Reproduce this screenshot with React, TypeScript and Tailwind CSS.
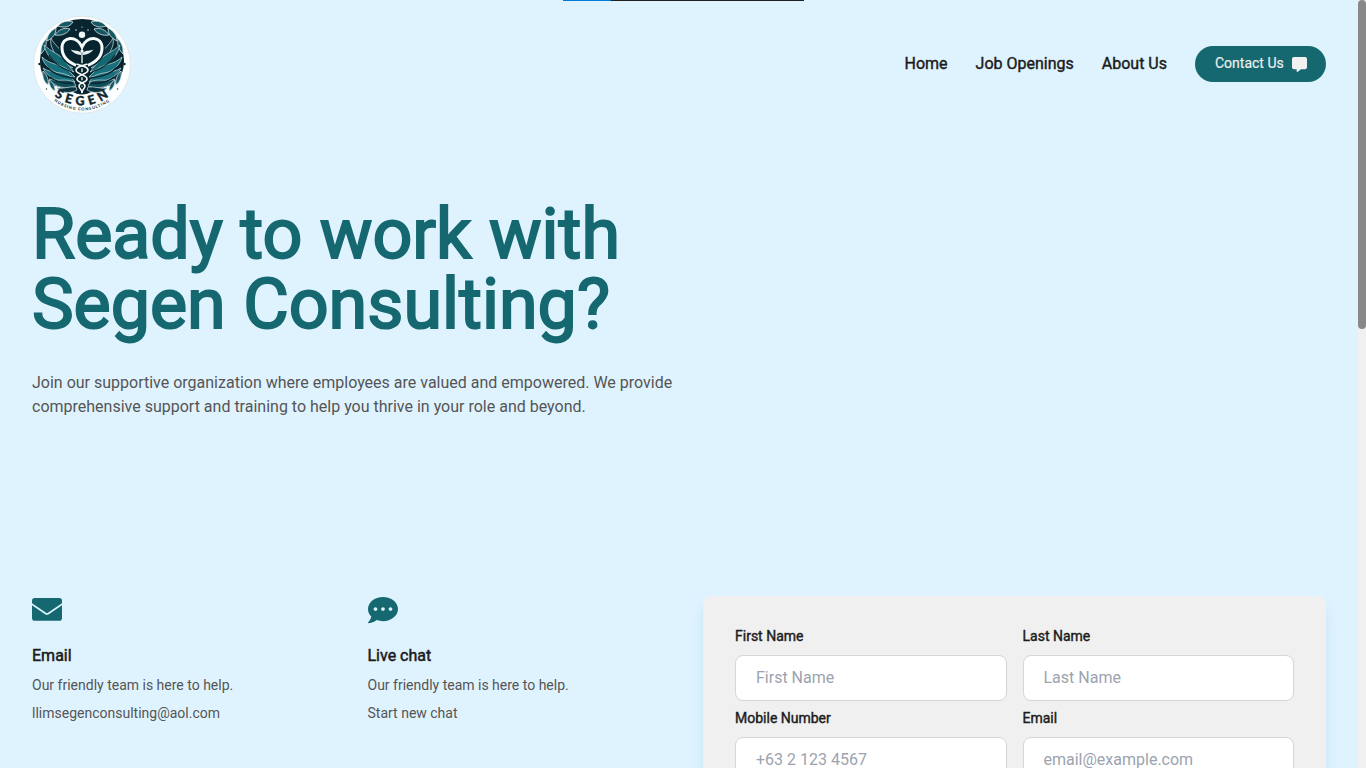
import { FaCommentDots } from "react-icons/fa";
import { FaMessage } from "react-icons/fa6";
import type { ReactNode } from "react";

function Envelope() {
  return (
    <svg viewBox="0 0 30 30" className="size-[30px]" aria-hidden="true">
      <rect x="0" y="3.1" width="30" height="22.6" rx="2.8" fill="currentColor" />
      <path d="M-1 8.6 L13.6 18.5 Q15 19.4 16.4 18.5 L31 8.6" fill="none" stroke="#dff3ff" strokeWidth="1.7" />
    </svg>
  );
}

function Wing() {
  return (
    <g stroke="#b4ccd0" strokeWidth="0.8" strokeLinejoin="round">
      <path d="M41 54 C32 50 24 44 21 36 C19 32 18 28 19 24 C22 31 29 34 31 42 C33 48 37 50 41 54Z" fill="#0b3440" />
      <path d="M42 58 C29 54 15 46 12 31 C19 38 28 40 33 47 C36 51 39 54 42 58Z" fill="#156772" />
      <path d="M43 63 C29 62 13 56 10 43 C18 51 29 50 36 56Z" fill="#17707c" />
      <path d="M43 68 C31 70 16 65 11 54 C20 60 31 57 39 63Z" fill="#17707c" />
      <path d="M44 72 C34 76 22 73 17 65 C26 68 34 64 42 68Z" fill="#104d59" />
      <path d="M45 76 C38 80 29 79 25 74 C32 75 38 72 44 73Z" fill="#0b3440" />
      <g fill="none" stroke="#08242e" strokeWidth="1.3">
        <path d="M40 58 C31 55 22 50 17 41" />
        <path d="M41 64 C31 63 21 60 15 53" />
        <path d="M41 69 C32 70 24 68 18 63" />
      </g>
    </g>
  );
}

function Leaves() {
  return (
    <g fill="#145864" stroke="#dce9eb" strokeWidth="0.8">
      <path d="M41 8 C35 6 29 8 26 12 C32 14 38 13 41 8Z" />
      <path d="M38 15 C32 13 26 16 23 21 C29 22 35 20 38 15Z" />
      <path d="M24 14 C18 17 15 22 15 27 C21 24 24 20 24 14Z" />
      <path d="M14 25 C10 29 8.5 34 9 40 C13 36 15 31 14 25Z" />
      <path d="M11 57 C10 63 12 68 16 71 C17 66 15 61 11 57Z" />
      <path d="M17 66 C17 71 19 75 23 77 C23 72 21 68 17 66Z" />
    </g>
  );
}

function Logo() {
  return (
    <svg viewBox="0 0 100 100" className="size-[100px]" role="img" aria-label="Segen Nursing Consulting">
      <defs>
        <path id="brandArc" d="M10 67.9 A46 46 0 0 0 90 67.9" />
        <path id="tagArc" d="M10 73.2 A46 46 0 0 0 90 73.2" />
      </defs>
      <circle cx="50" cy="50.7" r="48.5" fill="#fdfefe" stroke="#d9dfe2" strokeWidth="0.7" />
      <path d="M50 5 A42 42 0 0 1 92 46 C92 57 89 64 82 70 C76 72 68 74 61 77 Q55 80.5 50 80.5 Q45 80.5 39 77 C32 74 24 72 18 70 C11 64 8 57 8 46 A42 42 0 0 1 50 5Z" fill="#08242e" />
      <Leaves />
      <g transform="matrix(-1 0 0 1 100 0)"><Leaves /></g>
      <Wing />
      <g transform="matrix(-1 0 0 1 100 0)"><Wing /></g>
      <path d="M46 52 C35 48 30 42 30 34 C30 22 45 21 50 33 C55 21 70 22 70 34 C70 42 65 48 54 52" fill="#08242e" stroke="#08242e" strokeWidth="6" />
      <path d="M46 52 C35 48 30 42 30 34 C30 22 45 21 50 33 C55 21 70 22 70 34 C70 42 65 48 54 52" fill="#08242e" stroke="#f8fbfb" strokeWidth="3" strokeLinecap="round" />
      <circle cx="50" cy="20.7" r="3.2" fill="#eef8fa" />
      <circle cx="44" cy="16" r="0.7" fill="#fff" />
      <circle cx="56" cy="16" r="0.7" fill="#fff" />
      <circle cx="50" cy="13" r="0.6" fill="#fff" />
      <path d="M50 38 V79" stroke="#f7fafa" strokeWidth="1.3" />
      <path d="M49 41 C45 40.5 41 39 38.5 35.5 C42 37 46 36 49 38.5 M51 41 C55 40.5 59 39 61.5 35.5 C58 37 54 36 51 38.5" fill="#e5eef0" />
      <circle cx="50" cy="37" r="1.6" fill="#f7fafa" />
      <g fill="none" stroke="#08242e" strokeWidth="4.4">
        <path d="M45 50 C48 52 56 52 56 56 C56 61 45 60 45 65 C45 69 53 68 53 72 C53 75 49 76 50 79" />
        <path d="M55 50 C52 52 44 52 44 56 C44 61 55 60 55 65 C55 69 47 68 47 72 C47 75 51 76 50 79" />
      </g>
      <g fill="none" stroke="#f7fafa" strokeWidth="1.6">
        <path d="M45 50 C48 52 56 52 56 56 C56 61 45 60 45 65 C45 69 53 68 53 72 C53 75 49 76 50 79" />
        <path d="M55 50 C52 52 44 52 44 56 C44 61 55 60 55 65 C55 69 47 68 47 72 C47 75 51 76 50 79" />
      </g>
      <circle cx="7.5" cy="50" r="1.2" fill="#08242e" />
      <circle cx="92.5" cy="50" r="1.2" fill="#08242e" />
      <circle cx="14.5" cy="75" r="0.7" fill="#24383e" />
      <circle cx="85.5" cy="75" r="0.7" fill="#24383e" />
      <text className="font-['Lato',sans-serif]" fontSize="12.5" fontWeight="900" fill="#10282e" stroke="#10282e" strokeWidth="0.35" textAnchor="middle" letterSpacing="4.6">
        <textPath href="#brandArc" startOffset="52%">SEGEN</textPath>
      </text>
      <text className="font-['Lato',sans-serif]" fontSize="4" fontWeight="900" fill="#263b41" textAnchor="middle" letterSpacing="0.85">
        <textPath href="#tagArc" startOffset="50%">NURSING CONSULTING</textPath>
      </text>
    </svg>
  );
}

function ContactMethod({ icon, title, action }: { icon: ReactNode; title: string; action: string }) {
  return (
    <div className="flex flex-1 flex-col items-start">
      <div className="text-[30px] text-[#166870]">{icon}</div>
      <h2 className="mt-[19px] text-base leading-6 [-webkit-text-stroke:0.5px_currentColor]">{title}</h2>
      <p className="mt-[7px] text-sm leading-5 text-[#555]">Our friendly team is here to help.</p>
      <p className="mt-2 text-sm leading-5 text-[#555]">{action}</p>
    </div>
  );
}

function Field({ label, placeholder }: { label: string; placeholder: string }) {
  return (
    <label className="block">
      <span className="block text-sm leading-5 [-webkit-text-stroke:0.4px_currentColor]">{label}</span>
      <input
        placeholder={placeholder}
        className="mt-[9px] block h-[46px] w-full rounded-lg border border-[#d6d6d6] bg-white px-5 pb-[9px] pt-[7px] text-base placeholder:text-[#9ca3af]"
      />
    </label>
  );
}

export default function App() {
  return (
    <div className="relative flex h-screen overflow-hidden bg-[#dff3ff] font-['Roboto',sans-serif] text-[#1b1b1b]">
      <div className="absolute left-[563px] top-0 flex h-px w-[241px] bg-[#202020]">
        <div className="w-12 bg-[#0078d7]" />
      </div>
      <main className="min-w-0 flex-1 overflow-hidden px-8">
        <header className="flex h-32 items-center justify-between">
          <Logo />
          <nav className="flex items-center gap-7 text-base [-webkit-text-stroke:0.4px_currentColor]">
            <a>Home</a>
            <a>Job Openings</a>
            <a>About Us</a>
            <a className="flex h-9 w-[131px] items-center gap-2 rounded-full bg-[#166870] pl-5 text-sm text-[#f0f0f0] [-webkit-text-stroke:0.15px_currentColor]">
              <span className="whitespace-nowrap pb-0.5">Contact Us</span>
              <FaMessage size={15} />
            </a>
          </nav>
        </header>
        <section className="h-[467px] pt-[71px]">
          <h1 className="w-[660px] text-[70px] leading-[70px] text-[#166870] [-webkit-text-stroke:2px_currentColor]">
            Ready to work with Segen Consulting?
          </h1>
          <p className="mt-8 w-[660px] text-base leading-6 text-[#555]">
            Join our supportive organization where employees are valued and empowered. We provide comprehensive support and training to help you thrive in your role and beyond.
          </p>
        </section>
        <section className="flex items-start">
          <div className="flex w-[671px]">
            <ContactMethod icon={<Envelope />} title="Email" action="llimsegenconsulting@aol.com" />
            <ContactMethod icon={<FaCommentDots />} title="Live chat" action="Start new chat" />
          </div>
          <form className="mt-px grid h-[520px] flex-1 grid-cols-2 content-start gap-x-4 gap-y-[7px] rounded-lg bg-[#f0f0f0] px-8 pt-[30px] shadow-lg shadow-sky-800/15">
            <Field label="First Name" placeholder="First Name" />
            <Field label="Last Name" placeholder="Last Name" />
            <Field label="Mobile Number" placeholder="+63 2 123 4567" />
            <Field label="Email" placeholder="email@example.com" />
          </form>
        </section>
      </main>
      <div className="w-2 shrink-0 bg-[#f0f0f0]">
        <div className="h-[329px] rounded-full bg-[#888]" />
      </div>
    </div>
  );
}
